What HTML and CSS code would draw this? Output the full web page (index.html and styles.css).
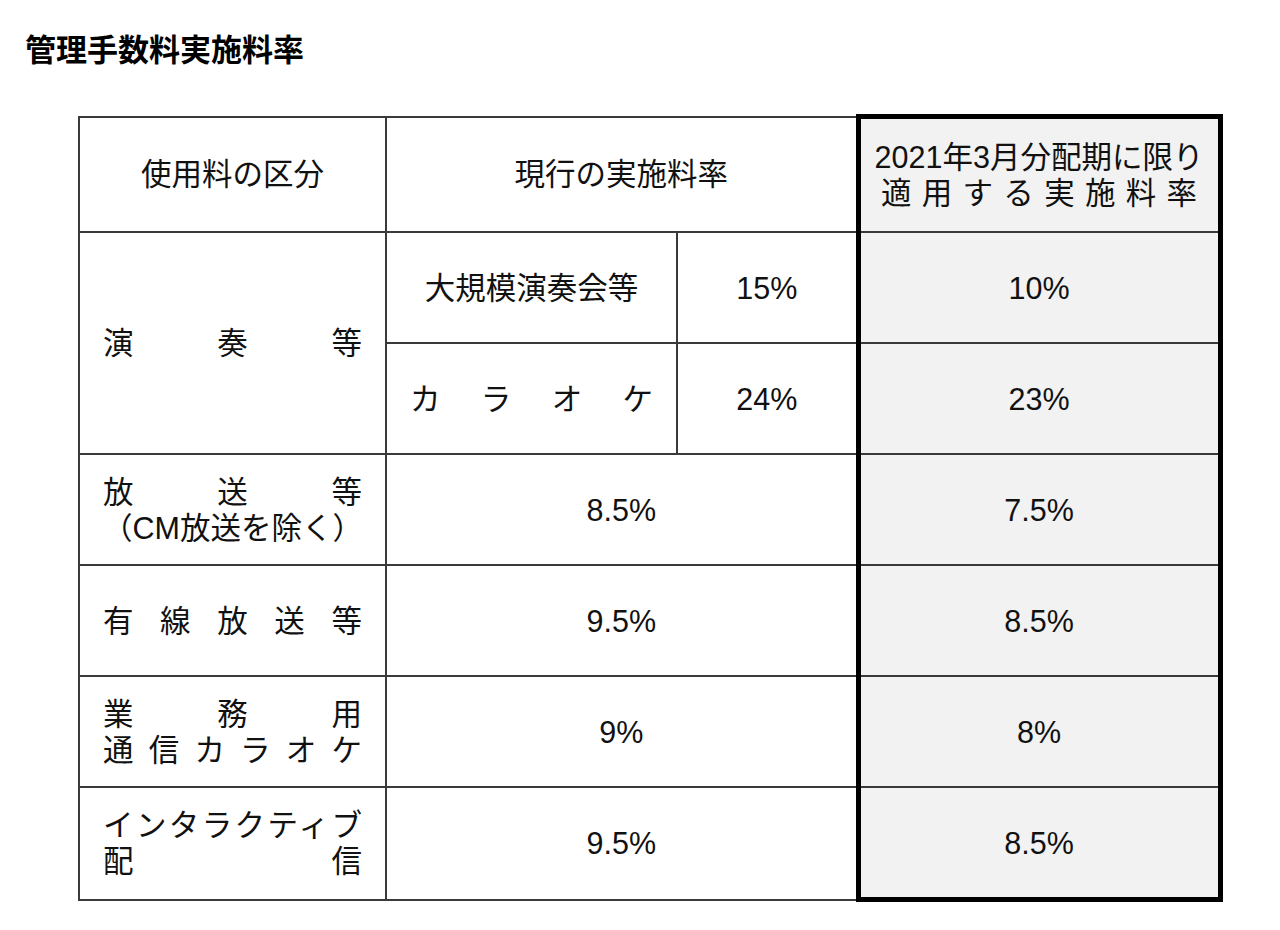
FILE: index.html
```html
<!DOCTYPE html>
<html lang="ja">
<head>
<meta charset="utf-8">
<title>管理手数料実施料率</title>
<link rel="stylesheet" href="styles.css">
</head>
<body>
<div class="page">
  <h1 class="title">管理手数料実施料率</h1>
  <table class="rates">
    <colgroup>
      <col class="c1"><col class="c2"><col class="c3"><col class="c4">
    </colgroup>
    <tr class="head">
      <td class="center">使用料の区分</td>
      <td class="center" colspan="2">現行の実施料率</td>
      <td class="hl hl-top center"><div class="hl-line1">2021年3月分配期に限り</div><div class="dist hl-line2">適用する実施料率</div></td>
    </tr>
    <tr>
      <td class="dist cat" rowspan="2">演奏等</td>
      <td class="center">大規模演奏会等</td>
      <td class="center">15%</td>
      <td class="hl center">10%</td>
    </tr>
    <tr>
      <td class="dist sub">カラオケ</td>
      <td class="center">24%</td>
      <td class="hl center">23%</td>
    </tr>
    <tr>
      <td class="cat"><div class="dist">放送等</div><div class="note">（CM放送を除く）</div></td>
      <td class="center" colspan="2">8.5%</td>
      <td class="hl center">7.5%</td>
    </tr>
    <tr>
      <td class="dist cat">有線放送等</td>
      <td class="center" colspan="2">9.5%</td>
      <td class="hl center">8.5%</td>
    </tr>
    <tr>
      <td class="dist cat">業務用<br>通信カラオケ</td>
      <td class="center" colspan="2">9%</td>
      <td class="hl center">8%</td>
    </tr>
    <tr>
      <td class="dist cat">インタラクティブ<br>配信</td>
      <td class="center" colspan="2">9.5%</td>
      <td class="hl hl-bottom center">8.5%</td>
    </tr>
  </table>
</div>
</body>
</html>
```

FILE: styles.css
```css
html, body {
  margin: 0;
  padding: 0;
  background: #fff;
}

body {
  font-family: "Liberation Sans", "Noto Sans CJK JP", sans-serif;
  color: #111;
}

.page {
  padding: 33px 0 0 25px;
}

.title {
  margin: 0;
  font-size: 31px;
  line-height: 36px;
  font-weight: bold;
  color: #000;
}

.rates {
  margin: 45px 0 0 53px;
  border-collapse: collapse;
  table-layout: fixed;
  width: 1141px;
  font-size: 30.5px;
  line-height: 36px;
}

.c1 { width: 307px; }
.c2 { width: 291px; }
.c3 { width: 181px; }
.c4 { width: 362px; }

.rates td {
  border: 2px solid #3a3a3a;
  vertical-align: middle;
  padding: 0 23px;
  height: 109px;
}

.rates tr.head td {
  height: 112px;
}

.center {
  text-align: center;
}

.dist {
  text-align: justify;
  text-align-last: justify;
  text-justify: inter-character;
}

.note {
  text-align: center;
  white-space: nowrap;
  margin: 0 -6px;
}

.hl {
  background: #f2f2f2;
  border-left: 5px solid #000 !important;
  border-right: 5px solid #000 !important;
}

.hl-top {
  border-top: 5px solid #000 !important;
}

.hl-bottom {
  border-bottom: 5px solid #000 !important;
}

.rates td.hl-top {
  padding: 0 4px;
}

.hl-line1 {
  white-space: nowrap;
}

.hl-line2 {
  width: 316px;
  margin: 0 auto;
}
```
